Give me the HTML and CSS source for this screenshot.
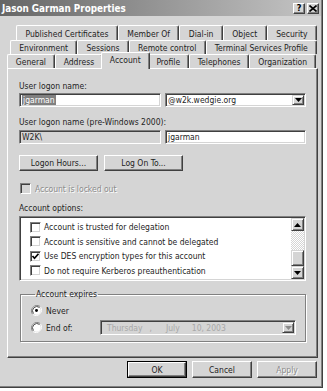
FILE: index.html
```html
<!DOCTYPE html>
<html>
<head>
<meta charset="utf-8">
<link rel="stylesheet" href="styles.css">
</head>
<body>
<div class="window">
  <div class="titlebar">
    <span class="title">Jason Garman Properties</span>
    <div class="tbtns">
      <span class="tbtn help">?</span>
      <span class="tbtn close"><svg width="8" height="7" viewBox="0 0 8 7"><path d="M0.5 0.5 L7.5 6.5 M7.5 0.5 L0.5 6.5" stroke="#000" stroke-width="1.6"/></svg></span>
    </div>
  </div>
  <div class="content">
    <div class="tabs">
      <div class="tabrow r1">
        <span class="tab">Published Certificates</span>
        <span class="tab">Member Of</span>
        <span class="tab">Dial-in</span>
        <span class="tab">Object</span>
        <span class="tab">Security</span>
      </div>
      <div class="tabrow r2">
        <span class="tab">Environment</span>
        <span class="tab">Sessions</span>
        <span class="tab">Remote control</span>
        <span class="tab">Terminal Services Profile</span>
      </div>
      <div class="tabrow r3">
        <span class="tab">General</span>
        <span class="tab">Address</span>
        <span class="tab active">Account</span>
        <span class="tab">Profile</span>
        <span class="tab">Telephones</span>
        <span class="tab">Organization</span>
      </div>
    </div>
    <div class="panel">
      <div class="label l1">User logon name:</div>
      <div class="pair p1">
        <div class="field"><span class="sel">jgarman</span></div>
        <div class="field combo"><span class="ctext">@w2k.wedgie.org</span><span class="dd"><svg width="7" height="4" viewBox="0 0 7 4"><path d="M0 0H7L3.5 4Z" fill="#000"/></svg></span></div>
      </div>
      <div class="label l2">User logon name (pre-Windows 2000):</div>
      <div class="pair p2">
        <div class="field disabled">W2K\</div>
        <div class="field">jgarman</div>
      </div>
      <div class="btnrow">
        <span class="btn wide">Logon Hours...</span>
        <span class="btn wide">Log On To...</span>
      </div>
      <div class="check locked"><span class="cb dis"></span><span class="distext">Account is locked out</span></div>
      <div class="label l3">Account options:</div>
      <div class="listbox">
        <div class="items">
          <div class="item"><span class="cb"></span>Account is trusted for delegation</div>
          <div class="item"><span class="cb"></span>Account is sensitive and cannot be delegated</div>
          <div class="item"><span class="cb"><svg width="9" height="9" viewBox="0 0 9 9"><path d="M1.5 4 L3.5 6.2 L7.5 1.8" stroke="#000" stroke-width="1.7" fill="none"/></svg></span>Use DES encryption types for this account</div>
          <div class="item"><span class="cb"></span>Do not require Kerberos preauthentication</div>
        </div>
        <div class="scrollbar">
          <span class="sbtn"><svg width="7" height="4" viewBox="0 0 7 4"><path d="M0 4H7L3.5 0Z" fill="#000"/></svg></span>
          <span class="track"></span>
          <span class="thumb"></span>
          <span class="sbtn"><svg width="7" height="4" viewBox="0 0 7 4"><path d="M0 0H7L3.5 4Z" fill="#000"/></svg></span>
        </div>
      </div>
      <fieldset class="group">
        <legend>Account expires</legend>
        <div class="radiorow">
          <svg class="radio" width="11" height="11" viewBox="0 0 12 12"><path d="M10.2 1.8A6 6 0 0 0 1.8 10.2" stroke="#808080" fill="none"/><path d="M1.8 10.2A6 6 0 0 0 10.2 1.8" stroke="#fff" fill="none"/><circle cx="6" cy="6" r="4.6" fill="#fff"/><path d="M9.3 2.7A4.7 4.7 0 0 0 2.7 9.3" stroke="#404040" fill="none"/><circle cx="6" cy="6" r="1.6" fill="#000"/></svg>
          <span class="rlabel">Never</span>
        </div>
        <div class="radiorow">
          <svg class="radio" width="11" height="11" viewBox="0 0 12 12"><path d="M10.2 1.8A6 6 0 0 0 1.8 10.2" stroke="#808080" fill="none"/><path d="M1.8 10.2A6 6 0 0 0 10.2 1.8" stroke="#fff" fill="none"/><circle cx="6" cy="6" r="4.6" fill="#fff"/><path d="M9.3 2.7A4.7 4.7 0 0 0 2.7 9.3" stroke="#404040" fill="none"/></svg>
          <span class="rlabel">End of:</span>
          <div class="datepick">
            <span class="d1">Thursday</span><span class="d2">,</span><span class="d3">July</span><span class="d4">10, 2003</span>
            <span class="dd ddis"><svg width="7" height="4" viewBox="0 0 7 4"><path d="M0 0H7L3.5 4Z" fill="#8a8a8a"/></svg></span>
          </div>
        </div>
      </fieldset>
    </div>
    <div class="footer">
      <span class="btn fbtn default"><span class="inner">OK</span></span>
      <span class="btn fbtn">Cancel</span>
      <span class="btn fbtn distext">Apply</span>
    </div>
  </div>
</div>
</body>
</html>
```

FILE: styles.css
```css
* { box-sizing: border-box; }
html, body { margin: 0; padding: 0; background: #ffffff; }
body {
  width: 327px;
  height: 391px;
  overflow: hidden;
  font-family: "DejaVu Sans Condensed", "DejaVu Sans", sans-serif;
  font-size: 8.5px;
  color: #1e1e1e;
}
.window {
  width: 323px;
  height: 388px;
  background: #d5d5d5;
  box-shadow: inset -1px -1px #404040, inset -2px -2px #808080;
  display: flex;
  flex-direction: column;
}
.titlebar {
  height: 16px;
  margin-right: 2px;
  background: linear-gradient(to right, #666666, #c6c6c6);
  display: flex;
  align-items: center;
  justify-content: space-between;
  padding: 0 2px 0 2px;
}
.title {
  color: #fff;
  font-weight: bold;
  font-size: 9.8px;
}
.tbtns { display: flex; gap: 2px; }
.tbtn {
  width: 12px;
  height: 11px;
  background: #d5d5d5;
  border: 1px solid;
  border-color: #fff #404040 #404040 #fff;
  box-shadow: inset -1px -1px #808080;
  display: flex;
  align-items: center;
  justify-content: center;
  font-weight: bold;
  font-size: 9px;
  line-height: 1;
  color: #000;
}
.content {
  flex: 1;
  padding: 9px 5px 0 7px;
  display: flex;
  flex-direction: column;
}
.tabs { display: flex; flex-direction: column; }
.tabrow { display: flex; height: 14px; }
.tabrow.r1 { height: 15px; margin-left: 9px; margin-right: 1px; }
.tabrow.r2 { margin-left: 3px; margin-right: 1px; }
.tabrow.r3 { margin-right: 2px; }
.tab {
  flex: 1 1 auto;
  padding: 0 4px;
  white-space: nowrap;
  text-align: center;
  border-top: 1px solid #fff;
  border-left: 1px solid #fff;
  border-right: 1px solid #404040;
  box-shadow: inset -1px 0 #808080;
  border-radius: 2px 2px 0 0;
  background: #d5d5d5;
  display: flex;
  align-items: center;
  justify-content: center;
  padding-top: 1px;
}
.tab.active {
  position: relative;
  z-index: 2;
  margin: -2px -2px -1px -2px;
  padding-bottom: 3px;
}
.panel {
  height: 290px;
  border: 1px solid;
  border-color: #fff #404040 #404040 #fff;
  box-shadow: inset -1px -1px #808080;
  padding: 12px 11px 0 11px;
  display: flex;
  flex-direction: column;
}
.label { height: 11px; line-height: 11px; white-space: nowrap; }
.l2 { margin-top: 10px; }
.l3 { margin-top: 8px; }
.pair {
  display: grid;
  grid-template-columns: 142px 141px;
  column-gap: 4px;
  margin-top: 1px;
}
.p2 { margin-top: 2px; }
.field {
  height: 14px;
  background: #fff;
  border: 1px solid;
  border-color: #808080 #fff #fff #808080;
  box-shadow: inset 1px 1px #404040, inset -1px -1px #d5d5d5;
  padding: 0 2px;
  display: flex;
  align-items: center;
  white-space: nowrap;
}
.field.disabled { background: #d5d5d5; }
.sel { background: #808080; color: #fff; padding: 0 1px; line-height: 10px; }
.combo { padding-right: 1px; justify-content: space-between; }
.dd {
  width: 12px;
  height: 10px;
  background: #d5d5d5;
  border: 1px solid;
  border-color: #d5d5d5 #404040 #404040 #d5d5d5;
  box-shadow: inset 1px 1px #fff, inset -1px -1px #808080;
  display: flex;
  align-items: center;
  justify-content: center;
}
.btnrow { display: flex; gap: 6px; margin-top: 11px; }
.btn {
  height: 16px;
  background: #d5d5d5;
  border: 1px solid;
  border-color: #fff #404040 #404040 #fff;
  box-shadow: inset -1px -1px #808080;
  display: flex;
  align-items: center;
  justify-content: center;
  white-space: nowrap;
}
.btn.wide { width: 79px; }
.check { display: flex; align-items: center; gap: 4px; margin-top: 11px; height: 13px; padding-left: 1px; }
.cb {
  width: 11px;
  height: 11px;
  flex: 0 0 11px;
  background: #fff;
  border: 1px solid;
  border-color: #808080 #fff #fff #808080;
  box-shadow: inset 1px 1px #404040, inset -1px -1px #d5d5d5;
  display: flex;
  align-items: center;
  justify-content: center;
}
.cb.dis { background: #d5d5d5; }
.distext { color: #8c8c8c; text-shadow: 1px 1px #fff; }
.listbox {
  margin-top: 2px;
  height: 65px;
  background: #fff;
  border: 1px solid;
  border-color: #808080 #fff #fff #808080;
  box-shadow: inset 1px 1px #404040, inset -1px -1px #d5d5d5;
  padding: 1px;
  display: flex;
}
.items { flex: 1; padding: 2px 0 0 9px; }
.item { height: 14.5px; display: flex; align-items: center; gap: 3px; white-space: nowrap; }
.scrollbar { width: 13px; display: flex; flex-direction: column; }
.sbtn {
  height: 13px;
  background: #d5d5d5;
  border: 1px solid;
  border-color: #d5d5d5 #404040 #404040 #d5d5d5;
  box-shadow: inset 1px 1px #fff, inset -1px -1px #808080;
  display: flex;
  align-items: center;
  justify-content: center;
}
.track {
  flex: 1;
  background-color: #fff;
  background-image: conic-gradient(#d5d5d5 25%, #fff 0 50%, #d5d5d5 0 75%, #fff 0);
  background-size: 2px 2px;
}
.thumb {
  height: 16px;
  background: #d5d5d5;
  border: 1px solid;
  border-color: #d5d5d5 #404040 #404040 #d5d5d5;
  box-shadow: inset 1px 1px #fff, inset -1px -1px #808080;
}
.group {
  margin: 8px 0 0 1px;
  padding: 2px 9px 0 10px;
  border: 1px solid #808080;
  box-shadow: inset 1px 1px #fff, 1px 1px #fff;
  height: 53px;
  min-width: 0;
}
.group legend { padding: 0 1px; margin-left: 4px; line-height: 11px; }
.radiorow { display: flex; align-items: center; height: 17px; }
.radio { flex: 0 0 11px; }
.rlabel { margin-left: 4px; }
.datepick {
  margin-left: auto;
  width: 196px;
  height: 15px;
  background: #d5d5d5;
  border: 1px solid;
  border-color: #808080 #fff #fff #808080;
  box-shadow: inset 1px 1px #404040, inset -1px -1px #d5d5d5;
  display: flex;
  align-items: center;
  padding: 0 1px 0 6px;
  color: #a8a8a8;
  white-space: nowrap;
}
.d2 { margin-left: 7px; }
.d3 { margin-left: 14px; }
.d4 { margin-left: 12px; }
.ddis { margin-left: auto; height: 11px; }
.footer {
  display: flex;
  justify-content: flex-end;
  gap: 5px;
  padding-top: 3px;
  margin-right: 1px;
}
.fbtn { width: 60px; height: 17px; }
.btn.default {
  border: 1px solid #000;
  box-shadow: none;
  padding: 0;
}
.btn.default .inner {
  width: 100%;
  height: 100%;
  display: flex;
  align-items: center;
  justify-content: center;
  border: 1px solid;
  border-color: #fff #404040 #404040 #fff;
  box-shadow: inset -1px -1px #808080;
}
```
